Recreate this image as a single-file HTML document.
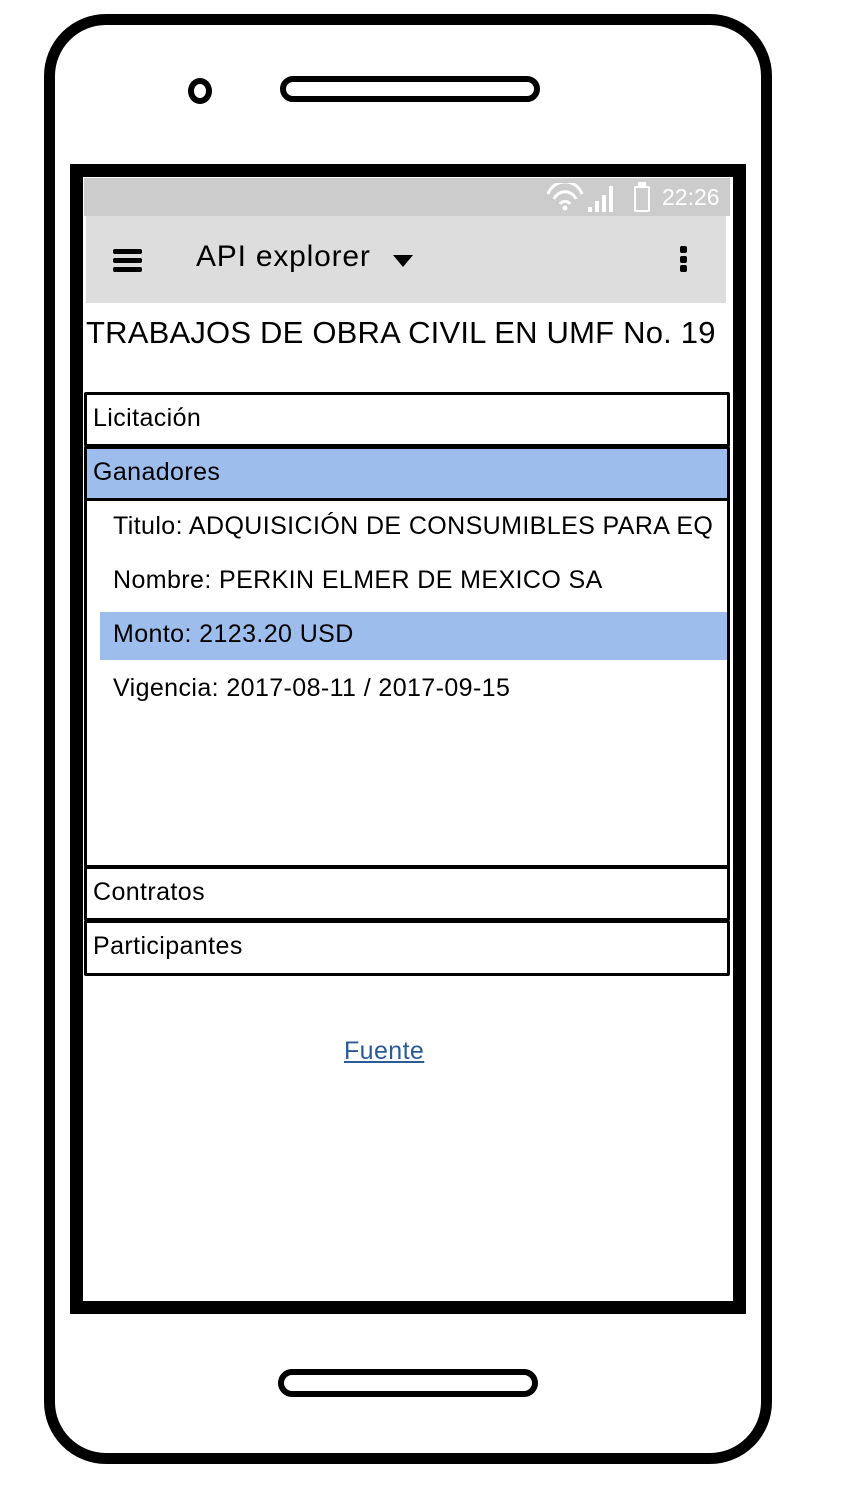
<!DOCTYPE html>
<html><head><meta charset="utf-8"><style>
*{margin:0;padding:0;box-sizing:border-box}
body{width:852px;height:1496px;background:#fff;position:relative;font-family:"Liberation Sans",sans-serif;color:#000;overflow:hidden}
.a{position:absolute}
.t{position:absolute;font-size:25px;letter-spacing:0.4px;white-space:nowrap}
.box{position:absolute;left:84px;width:646px;border:3px solid #000;border-radius:2px}
</style></head><body>
<div class="a" style="left:44px;top:14px;width:728px;height:1450px;border:11px solid #000;border-radius:62px"></div>
<div class="a" style="left:188px;top:78px;width:24px;height:26px;border:6px solid #000;border-radius:50%"></div>
<div class="a" style="left:280px;top:76px;width:260px;height:26px;border:6px solid #000;border-radius:14px"></div>
<div class="a" style="left:278px;top:1369px;width:260px;height:28px;border:6px solid #000;border-radius:14px"></div>
<div class="a" style="left:70px;top:164px;width:676px;height:1150px;border:13px solid #000"></div>
<div class="a" style="left:84px;top:178px;width:646px;height:38px;background:#ccc"></div>
<svg class="a" style="left:545px;top:183px" width="80" height="30" viewBox="0 0 80 30">
<path d="M3 11 A18 18 0 0 1 37 11" stroke="#fff" stroke-width="3" fill="none"/>
<path d="M9 16 A12 12 0 0 1 31 16" stroke="#fff" stroke-width="3" fill="none"/>
<path d="M15 21 A6 6 0 0 1 25 21" stroke="#fff" stroke-width="3" fill="none"/>
<circle cx="20" cy="25" r="2.5" fill="#fff"/>
<rect x="43" y="24" width="4" height="5" fill="#fff"/><rect x="50" y="18" width="4" height="11" fill="#fff"/><rect x="57" y="12" width="4" height="17" fill="#fff"/><rect x="64" y="3" width="4" height="26" fill="#fff"/>
</svg>
<div class="a" style="left:634px;top:186px;width:16px;height:26px;border:2px solid #fff;border-radius:2px"></div>
<div class="a" style="left:638px;top:182px;width:8px;height:4px;background:#fff"></div>
<div class="t" style="left:662px;top:184px;color:#fff;font-size:23px;letter-spacing:0">22:26</div>
<div class="a" style="left:86px;top:216px;width:640px;height:87px;background:#ddd"></div>
<div class="a" style="left:113px;top:249px;width:29px;height:5px;background:#000;border-radius:2px"></div>
<div class="a" style="left:113px;top:258px;width:29px;height:5px;background:#000;border-radius:2px"></div>
<div class="a" style="left:113px;top:267px;width:29px;height:5px;background:#000;border-radius:2px"></div>
<div class="t" style="left:196px;top:240px;font-size:30px;letter-spacing:0.8px">API explorer</div>
<svg class="a" style="left:392px;top:254px" width="22" height="14"><path d="M1 1 L21 1 L11 13Z" fill="#000"/></svg>
<div class="a" style="left:680px;top:246px;width:7px;height:7px;background:#000;border-radius:2px"></div>
<div class="a" style="left:680px;top:256px;width:7px;height:7px;background:#000;border-radius:2px"></div>
<div class="a" style="left:680px;top:265px;width:7px;height:7px;background:#000;border-radius:2px"></div>
<div class="t" style="left:86px;top:315px;font-size:31px;letter-spacing:0.2px">TRABAJOS DE OBRA CIVIL EN UMF No. 19</div>
<div class="box" style="top:392px;height:55px"></div>
<div class="t" style="left:93px;top:404px">Licitación</div>
<div class="box" style="top:446px;height:55px;background:#9dbdec"></div>
<div class="t" style="left:93px;top:458px">Ganadores</div>
<div class="box" style="top:498px;height:370px;border-top:none"></div>
<div class="a" style="left:100px;top:612px;width:627px;height:48px;background:#9dbdec"></div>
<div class="t" style="left:113px;top:512px">Titulo: ADQUISICIÓN DE CONSUMIBLES PARA EQ</div>
<div class="t" style="left:113px;top:566px">Nombre: PERKIN ELMER DE MEXICO SA</div>
<div class="t" style="left:113px;top:620px">Monto: 2123.20 USD</div>
<div class="t" style="left:113px;top:674px">Vigencia: 2017-08-11 / 2017-09-15</div>
<div class="box" style="top:866px;height:55px"></div>
<div class="t" style="left:93px;top:878px">Contratos</div>
<div class="box" style="top:920px;height:56px"></div>
<div class="t" style="left:93px;top:932px">Participantes</div>
<div class="t" style="left:344px;top:1037px;color:#2a5a9a;text-decoration:underline">Fuente</div>
</body></html>
